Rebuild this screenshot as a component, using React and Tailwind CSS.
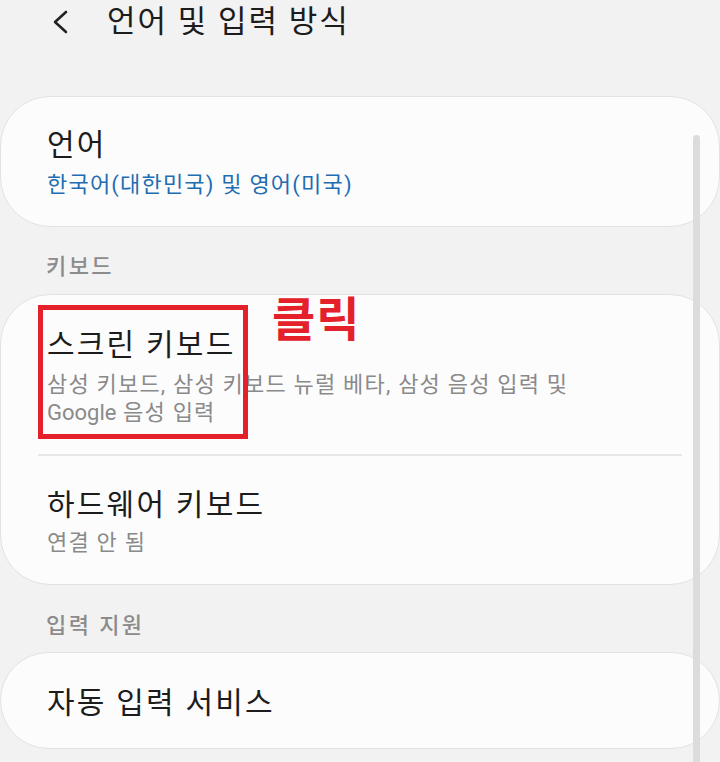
import React from 'react';

const FONT = { fontFamily: 'Roboto, "Noto Sans CJK KR", "Noto Sans", sans-serif' };

function Row({ title, sub, subColor = 'text-[#8a8a8a]', pt = 'pt-[30px]', pb = 'pb-[27px]', gap = 'mt-[6px]', subWidth }) {
  return (
    <div className={`pl-[46px] ${pt} ${pb}`}>
      <div className="text-[30px] leading-[40px] tracking-[2.2px] text-[#1c1c1c]">{title}</div>
      {sub && (
        <div className={`${gap} text-[22px] leading-[28px] tracking-[1.2px] ${subColor} ${subWidth || ''}`}>{sub}</div>
      )}
    </div>
  );
}

function SectionLabel({ children, mt, mb }) {
  return (
    <div className={`pl-[46px] ${mt} ${mb} text-[22px] leading-[28px] tracking-[2.4px] text-[#8c8c8c] font-medium`}>
      {children}
    </div>
  );
}

export default function App() {
  return (
    <div style={FONT} className="relative w-[720px] h-[762px] overflow-hidden bg-[#f2f2f2]">
      {/* Header */}
      <div className="h-[44px] flex items-center">
        <svg width="18" height="24" viewBox="0 0 18 24" className="ml-[51px]" fill="none">
          <path d="M15 2 L4 12 L15 22" stroke="#222" strokeWidth="2.6" strokeLinecap="round" strokeLinejoin="round" />
        </svg>
        <span className="ml-[38px] text-[31px] leading-[44px] tracking-[2px] text-[#1c1c1c]">언어 및 입력 방식</span>
      </div>

      {/* 언어 */}
      <div className="mt-[52px] bg-[#fcfcfc] border border-[#e2e2e2] rounded-[50px]">
        <Row
          title="언어"
          sub="한국어(대한민국) 및 영어(미국)"
          subColor="text-[#1f6db3]"
          pt="pt-[28px]"
          pb="pb-[27px]"
        />
      </div>

      <SectionLabel mt="mt-[26px]" mb="mb-[13px]">키보드</SectionLabel>

      {/* 키보드 */}
      <div className="relative bg-[#fcfcfc] border border-[#e2e2e2] rounded-[50px]">
        <Row
          title="스크린 키보드"
          sub={<>삼성 키보드, 삼성 키보드 뉴럴 베타, 삼성 음성 입력 및 <span className="tracking-normal">Google</span> 음성 입력</>}
          pt="pt-[30px]"
          pb="pb-[27px]"
          subWidth="w-[582px]"
        />
        <div className="mx-[37px] h-[2px] bg-[#e6e6e6]" />
        <Row title="하드웨어 키보드" sub="연결 안 됨" pt="pt-[29px]" pb="pb-[27px]" gap="mt-[4px]" />

        {/* annotation */}
        <div className="absolute left-[37px] top-[10px] w-[210px] h-[134px] border-[5px] border-[#e4202b]" />
        <div className="absolute left-[271px] top-[1px] text-[47px] leading-[48px] tracking-[1px] font-bold text-[#e4202b]">클릭</div>
      </div>

      <SectionLabel mt="mt-[27px]" mb="mb-[12px]">입력 지원</SectionLabel>

      {/* 입력 지원 */}
      <div className="bg-[#fcfcfc] border border-[#e2e2e2] rounded-[50px]">
        <Row title="자동 입력 서비스" pt="pt-[30px]" pb="pb-[25px]" />
      </div>

      {/* scrollbar */}
      <div className="absolute left-[693px] top-[135px] w-[7px] h-[700px] rounded-full bg-[#dcdcdc]" />
    </div>
  );
}
